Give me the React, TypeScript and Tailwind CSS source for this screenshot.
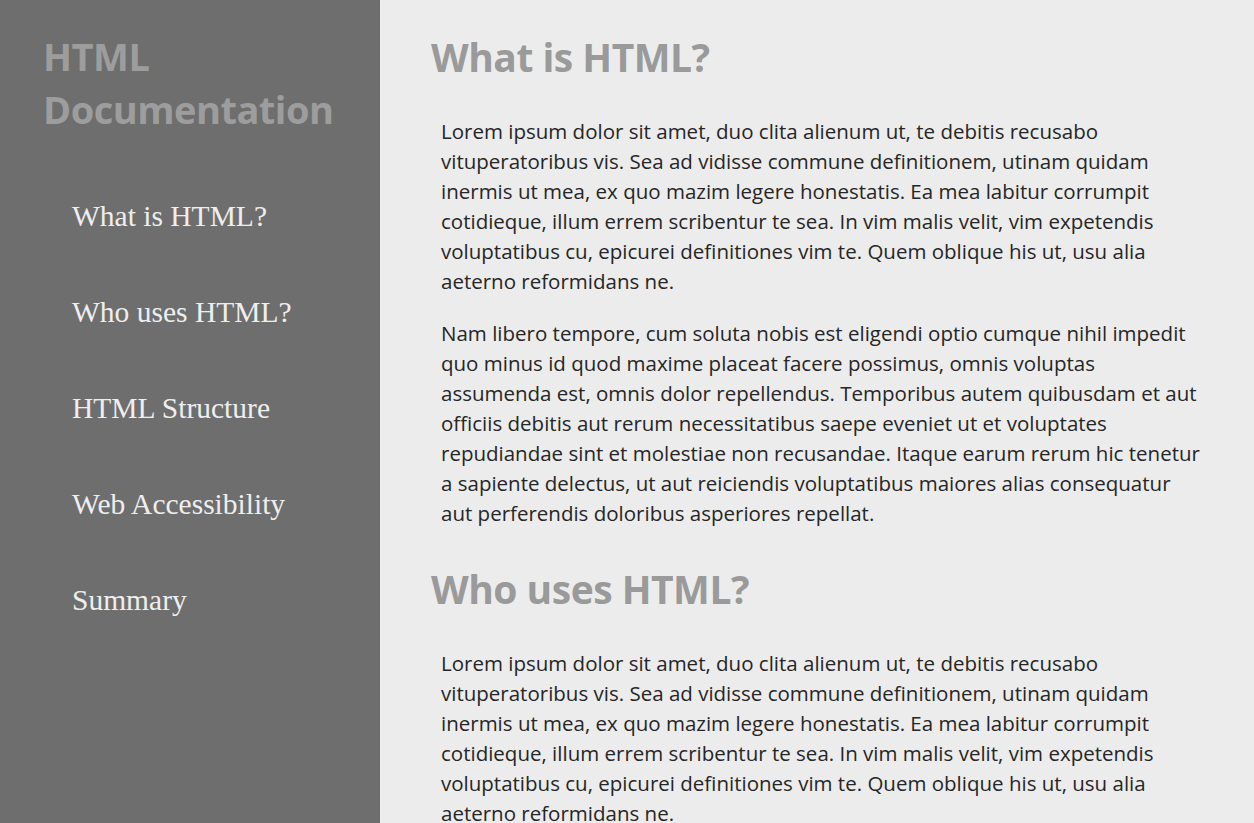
const navItems = ['What is HTML?', 'Who uses HTML?', 'HTML Structure', 'Web Accessibility', 'Summary'];

// line breaks kept as in the design
const lorem1 = [
  'Lorem ipsum dolor sit amet, duo clita alienum ut, te debitis recusabo',
  'vituperatoribus vis. Sea ad vidisse commune definitionem, utinam quidam',
  'inermis ut mea, ex quo mazim legere honestatis. Ea mea labitur corrumpit',
  'cotidieque, illum errem scribentur te sea. In vim malis velit, vim expetendis',
  'voluptatibus cu, epicurei definitiones vim te. Quem oblique his ut, usu alia',
  'aeterno reformidans ne.',
];

const lorem2 = [
  'Nam libero tempore, cum soluta nobis est eligendi optio cumque nihil impedit',
  'quo minus id quod maxime placeat facere possimus, omnis voluptas',
  'assumenda est, omnis dolor repellendus. Temporibus autem quibusdam et aut',
  'officiis debitis aut rerum necessitatibus saepe eveniet ut et voluptates',
  'repudiandae sint et molestiae non recusandae. Itaque earum rerum hic tenetur',
  'a sapiente delectus, ut aut reiciendis voluptatibus maiores alias consequatur',
  'aut perferendis doloribus asperiores repellat.',
];

const sections = [
  { id: 'what', title: 'What is HTML?', paragraphs: [lorem1, lorem2] },
  { id: 'who', title: 'Who uses HTML?', paragraphs: [lorem1, lorem2] },
  { id: 'structure', title: 'HTML Structure', paragraphs: [lorem1, lorem2] },
];

export default function App() {
  return (
    <div className="flex h-screen overflow-hidden bg-[#ececec] font-['Open_Sans',sans-serif]">
      {/* Sidebar */}
      <nav className="w-[380px] shrink-0 bg-[#6e6e6e]">
        <h1 className="pl-[43px] pt-[30px] text-[38px] font-bold leading-[53px] text-[#9d9d9d] tracking-[-0.5px]">
          HTML
          <br />
          Documentation
        </h1>
        <ul className="mt-[62px] flex flex-col gap-[60px] pl-[72px]">
          {navItems.map((item) => (
            <li key={item}>
              <a href="#" className="font-['Liberation_Serif',serif] text-[29.5px] leading-[36px] text-[#eeeeee]">
                {item}
              </a>
            </li>
          ))}
        </ul>
      </nav>

      {/* Main content */}
      <main className="flex-1 overflow-hidden pl-[51px] pr-[30px] pt-[33px]">
        {sections.map((section, i) => (
          <section key={section.id} className={i > 0 ? 'mt-[37px]' : ''}>
            <h2 className="text-[39px] font-bold leading-[48px] text-[#9a9a9a] tracking-[-0.5px]">{section.title}</h2>
            <div className="mt-[35px] flex flex-col gap-[22px] pl-[10px]">
              {section.paragraphs.map((lines, j) => (
                <p key={j} className="whitespace-nowrap text-[20.5px] leading-[30px] text-[#262626]">
                  {lines.map((line, k) => (
                    <span key={k}>
                      {line}
                      {k < lines.length - 1 && <br />}
                    </span>
                  ))}
                </p>
              ))}
            </div>
          </section>
        ))}
      </main>
    </div>
  );
}
